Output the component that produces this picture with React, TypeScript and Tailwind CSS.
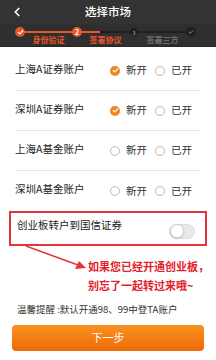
import { Check, ChevronLeft } from "lucide-react";

const accounts = [
  { name: "上海A证券账户", open: true },
  { name: "深圳A证券账户", open: true },
  { name: "上海A基金账户", open: false },
  { name: "深圳A基金账户", open: false },
];

function Radio({ checked, label }: { checked: boolean; label: string }) {
  return (
    <div className="flex items-center gap-[6px]">
      {checked ? (
        <span className="w-[10px] h-[10px] rounded-full bg-[#f0861c] flex items-center justify-center">
          <Check className="w-[7px] h-[7px] text-white" strokeWidth={4} />
        </span>
      ) : (
        <span className="w-[10px] h-[10px] rounded-full border border-[#b8b8b8] bg-white" />
      )}
      <span className="text-[10.5px] leading-none text-[#333]">{label}</span>
    </div>
  );
}

function Steps() {
  return (
    <div className="bg-[#2f2f2f] h-[23px] border-b border-[#262626] relative">
      <div className="relative flex justify-between pl-[15px] pr-[20px] pt-[3px]">
        <div className="absolute left-[20px] right-[25px] top-[7px] h-[2px] bg-[#1f1f1f]" />
        <div className="absolute left-[20px] w-[80px] top-[7px] h-[2px] bg-[#e8572a]" />
        <div className="relative w-[10px] h-[10px] rounded-full bg-[#e8572a] flex items-center justify-center">
          <Check className="w-[7px] h-[7px] text-white" strokeWidth={4} />
        </div>
        <div className="relative w-[10px] h-[10px] rounded-full bg-[#e8572a] flex items-center justify-center text-[7px] leading-none font-bold text-white">
          2
        </div>
        <div className="relative w-[10px] h-[10px] flex items-center justify-center">
          <div className="w-[8px] h-[8px] rounded-full bg-[#1f1f1f] flex items-center justify-center text-[5px] leading-none font-bold text-[#999]">
            3
          </div>
        </div>
        <div className="relative w-[10px] h-[10px] rounded-full bg-[#1f1f1f] flex items-center justify-center">
          <Check className="w-[6px] h-[6px] text-[#8a8a8a]" strokeWidth={4} />
        </div>
      </div>
      <div className="ml-[20px] w-[171px] grid grid-cols-3 text-[8px] leading-none font-bold mt-[-1px]">
        <span className="text-center text-[#e8572a]">身份验证</span>
        <span className="text-center text-[#e8572a]">签署协议</span>
        <span className="text-center text-[#6e6e6e]">签署三方</span>
      </div>
    </div>
  );
}

export default function App() {
  return (
    <div className="w-[216px] h-[360px] bg-white overflow-hidden font-['Noto_Sans_CJK_SC',sans-serif]">
      <div className="bg-[#333333] h-[24px] relative flex items-center justify-center">
        <ChevronLeft className="absolute left-[10px] top-[5px] w-[14px] h-[14px] text-white" strokeWidth={3} />
        <span className="text-white text-[11.5px] font-medium leading-none">选择市场</span>
      </div>
      <Steps />

      <div className="pt-[4px]">
        {accounts.map((acc, i) => (
          <div
            key={acc.name}
            className={`mx-[15px] h-[40px] flex items-center justify-between ${i < 3 ? "border-b border-[#e6e6e6]" : ""}`}
          >
            <span className="text-[10.5px] leading-none text-[#222] mt-[-3px]">{acc.name}</span>
            <div className="flex items-center gap-[8px] mr-[9px]">
              <Radio checked={acc.open} label="新开" />
              <Radio checked={false} label="已开" />
            </div>
          </div>
        ))}
      </div>

      <div className="mx-[9px] h-[35px] border-2 border-[#e2353b] flex items-center justify-between pl-[6px] pr-[10px]">
        <span className="text-[10.5px] leading-none text-[#222] mt-[-6px]">创业板转户到国信证券</span>
        <div className="w-[26px] h-[15px] rounded-full bg-[#e9e9e9] border border-[#dddddd] flex items-center mt-[5px]">
          <div className="w-[14px] h-[14px] rounded-full bg-white border border-[#d0d0d0] shadow-sm" />
        </div>
      </div>

      <div className="flex">
        <svg width="88" height="32" viewBox="0 0 88 32" className="shrink-0">
          <line x1="26" y1="0" x2="78" y2="19" stroke="#e2353b" strokeWidth="1.5" />
          <polygon points="86,22 75,23 79,15" fill="#e2353b" />
        </svg>
        <div className="pt-[11px] text-[11px] leading-[19px] font-bold text-[#e3222b] whitespace-nowrap">
          <div>如果您已经开通创业板，</div>
          <div>别忘了一起转过来哦~</div>
        </div>
      </div>

      <div className="mt-[10px] ml-[17px] text-[9.5px] leading-none text-[#333] whitespace-nowrap">
        温馨提醒 :默认开通98、99中登TA账户
      </div>

      <div className="mx-[12px] mt-[10px] h-[26px] rounded-[4px] bg-gradient-to-b from-[#f8921e] to-[#ef6a08] flex items-center justify-center">
        <span className="text-white text-[11px] leading-none">下一步</span>
      </div>
    </div>
  );
}
